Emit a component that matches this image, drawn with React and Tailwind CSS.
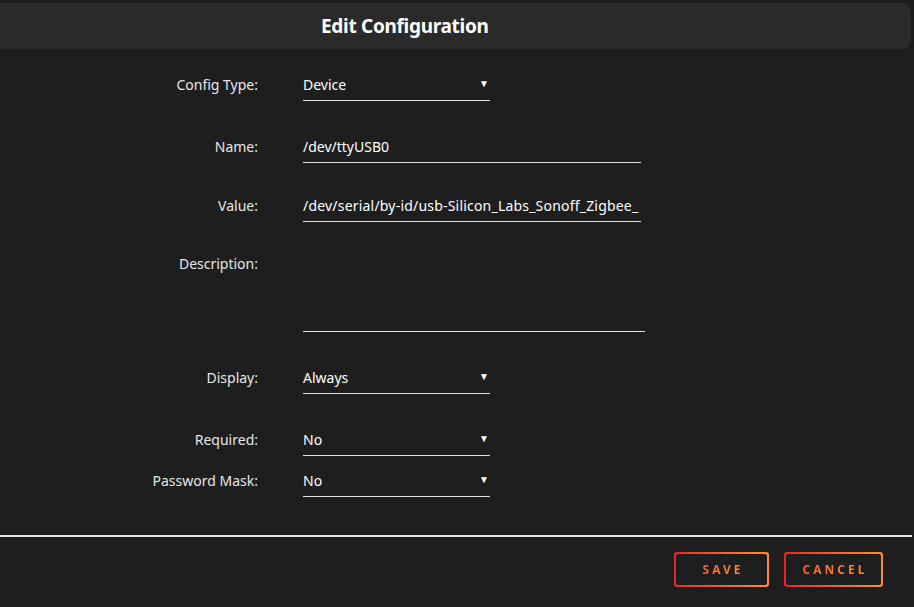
const font = { fontFamily: '"Noto Sans", "Open Sans", sans-serif' };

function Label({ children }) {
	return (
		<div className="w-[258px] shrink-0 text-right text-[14px] leading-[20px] text-[#e6e6e6]">
			{children}
		</div>
	);
}

function SelectField({ value }) {
	return (
		<div className="ml-[45px] w-[187px] h-[26px] pb-[5px] border-b border-[#e0e0e0] flex items-start justify-between">
			<span className="text-[14px] leading-[20px] text-white">{value}</span>
			<span className="text-[10px] leading-[20px] text-white mr-[1px] -mt-[2px]">▼</span>
		</div>
	);
}

function TextField({ value, clip = 'w-[338px]', tracking = '' }) {
	return (
		<div className="ml-[45px] w-[338px] h-[26px] pb-[5px] border-b border-[#e0e0e0]">
			<div className={`${clip} overflow-hidden whitespace-nowrap text-[14px] leading-[20px] text-white ${tracking}`}>
				{value}
			</div>
		</div>
	);
}

function OutlineButton({ children, width }) {
	return (
		<button className={`${width} h-[35px] p-[2px] rounded-[3px] bg-gradient-to-r from-[#e2262b] to-[#ff8b33]`}>
			<span className="flex w-full h-full items-center justify-center rounded-[2px] bg-[#1e1e1e]">
				<span className="text-[12px] font-bold tracking-[0.25em] pl-[3px] bg-gradient-to-r from-[#f5622c] to-[#ff8a30] bg-clip-text text-transparent">
					{children}
				</span>
			</span>
		</button>
	);
}

export default function App() {
	return (
		<div style={font} className="w-[914px] h-[607px] bg-[#1c1c1c] overflow-hidden">
			{/* header */}
			<div className="pt-[3px] pr-[3px]">
				<div className="h-[46px] bg-[#2a2a2a] rounded-r-lg flex items-center pl-[321px]">
					<h1 className="text-[19px] font-bold text-white tracking-[-0.3px]">Edit Configuration</h1>
				</div>
			</div>

			{/* body */}
			<div className="bg-[#1e1e1e] h-[558px] pt-[26px]">
				<div className="flex items-start">
					<Label>Config Type:</Label>
					<SelectField value="Device" />
				</div>
				<div className="flex items-start mt-[36px]">
					<Label>Name:</Label>
					<TextField value="/dev/ttyUSB0" />
				</div>
				<div className="flex items-start mt-[33px]">
					<Label>Value:</Label>
					<TextField
						value="/dev/serial/by-id/usb-Silicon_Labs_Sonoff_Zigbee_3.0_USB_Dongle_Plus"
						clip="w-[336px]"
						tracking="tracking-[0.2px]"
					/>
				</div>
				<div className="flex items-start mt-[32px]">
					<Label>Description:</Label>
					<div className="ml-[45px] w-[342px] h-[78px] border-b border-[#e0e0e0]" />
				</div>
				<div className="flex items-start mt-[36px]">
					<Label>Display:</Label>
					<SelectField value="Always" />
				</div>
				<div className="flex items-start mt-[36px]">
					<Label>Required:</Label>
					<SelectField value="No" />
				</div>
				<div className="flex items-start mt-[15px]">
					<Label>Password Mask:</Label>
					<SelectField value="No" />
				</div>

				{/* footer */}
				<div className="mt-[38px] mr-[2px] h-[2px] bg-[#e6e6e6]" />
				<div className="flex justify-end gap-[15px] pr-[31px] mt-[15px]">
					<OutlineButton width="w-[95px]">SAVE</OutlineButton>
					<OutlineButton width="w-[99px]">CANCEL</OutlineButton>
				</div>
			</div>
		</div>
	);
}
